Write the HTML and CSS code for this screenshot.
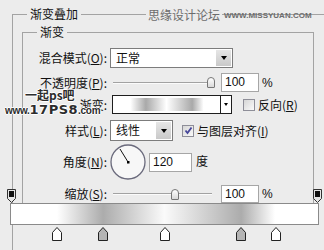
FILE: index.html
```html
<!DOCTYPE html>
<html lang="zh-CN">
<head>
  <meta charset="UTF-8">
  <meta name="viewport" content="width=device-width, initial-scale=1.0">
  <title>渐变叠加</title>
  <link rel="stylesheet" href="styles.css">
</head>
<body>
  <section class="group outer">
    <div class="group-title">渐变叠加</div>

    <section class="group inner">
      <div class="group-title">渐变</div>

      <div class="row row-blend">
        <span class="lbl">混合模式(<u>O</u>):</span>
        <div class="select blend-select">
          <span class="select-text">正常</span>
          <span class="select-btn"><i class="tri"></i></span>
        </div>
      </div>

      <div class="row row-opacity">
        <span class="lbl">不透明度(<u>P</u>):</span>
        <div class="slider opacity-slider">
          <span class="track" style="width: 94px"></span>
          <span class="thumb"></span>
        </div>
        <span class="field">100</span>
        <span class="unit">%</span>
      </div>

      <div class="row row-gradient">
        <span class="lbl">渐变:</span>
        <div class="grad-field">
          <span class="grad-preview"></span>
          <span class="grad-btn"><i class="tri tri-sm"></i></span>
        </div>
        <span class="check"></span>
        <span class="check-text">反向(<u>R</u>)</span>
      </div>

      <div class="row row-style">
        <span class="lbl">样式(<u>L</u>):</span>
        <div class="select style-select">
          <span class="select-text">线性</span>
          <span class="select-btn"><i class="tri"></i></span>
        </div>
        <span class="check is-checked">
          <svg width="9" height="9" viewBox="0 0 9 9"><path d="M1.5 4.5 L3.5 7 L7.5 1.5" fill="none" stroke="#46469a" stroke-width="1.8"/></svg>
        </span>
        <span class="check-text">与图层对齐(<u>I</u>)</span>
      </div>

      <div class="row row-angle">
        <span class="lbl">角度(<u>N</u>):</span>
        <svg class="dial" width="36" height="36" viewBox="0 0 36 36">
          <circle cx="18" cy="18" r="17" fill="#f7f7f7" stroke="#6a6a7c" stroke-width="1.3"/>
          <line x1="18" y1="18" x2="10" y2="5" stroke="#111" stroke-width="1"/>
          <rect x="17" y="17" width="2.5" height="2.5" fill="#000"/>
        </svg>
        <span class="field angle-field">120</span>
        <span class="unit deg">度</span>
      </div>

      <div class="row row-scale">
        <span class="lbl">缩放(<u>S</u>):</span>
        <div class="slider scale-slider">
          <span class="track" style="width: 58px"></span>
          <span class="thumb"></span>
          <span class="track rest"></span>
        </div>
        <span class="field scale-field">100</span>
        <span class="unit">%</span>
      </div>
    </section>
  </section>

  <!-- watermarks stamped over the dialog -->
  <div class="wm-site">
    <span class="wm-cn">思缘设计论坛</span>
    <span class="wm-url">WWW.MISSYUAN.COM</span>
  </div>

  <div class="wm-ps">
    <div class="wm-ps-cn">一起ps吧</div>
    <div class="wm-ps-url"><span class="sm">www.</span><span class="big">17PS8</span><span class="sm">.com</span></div>
  </div>

  <!-- gradient editor strip pasted over the bottom -->
  <div class="editor">
    <div class="opacity-stops">
      <svg class="ostop" width="9" height="14" viewBox="0 0 9 14">
        <path d="M0.5 0.5 H8.5 V9.5 L4.5 13.5 L0.5 9.5 Z" fill="#e6e6e6" stroke="#333"/>
        <rect x="2" y="2" width="5" height="6" fill="#111"/>
      </svg>
      <svg class="ostop" width="9" height="14" viewBox="0 0 9 14">
        <path d="M0.5 0.5 H8.5 V9.5 L4.5 13.5 L0.5 9.5 Z" fill="#e6e6e6" stroke="#333"/>
        <rect x="2" y="2" width="5" height="6" fill="#111"/>
      </svg>
    </div>

    <div class="bar"></div>

    <div class="color-stops">
      <svg class="cstop" style="left: 15.3%" width="10" height="14" viewBox="0 0 10 14">
        <path d="M0.5 13.5 V5.5 L5 0.5 L9.5 5.5 V13.5 Z" fill="#fff" stroke="#222"/>
      </svg>
      <svg class="cstop" style="left: 30.2%" width="10" height="14" viewBox="0 0 10 14">
        <path d="M0.5 13.5 V5.5 L5 0.5 L9.5 5.5 V13.5 Z" fill="#b4b4b4" stroke="#222"/>
      </svg>
      <svg class="cstop" style="left: 50.3%" width="10" height="14" viewBox="0 0 10 14">
        <path d="M0.5 13.5 V5.5 L5 0.5 L9.5 5.5 V13.5 Z" fill="#fff" stroke="#222"/>
      </svg>
      <svg class="cstop" style="left: 75%" width="10" height="14" viewBox="0 0 10 14">
        <path d="M0.5 13.5 V5.5 L5 0.5 L9.5 5.5 V13.5 Z" fill="#b4b4b4" stroke="#222"/>
      </svg>
      <svg class="cstop" style="left: 86.4%" width="10" height="14" viewBox="0 0 10 14">
        <path d="M0.5 13.5 V5.5 L5 0.5 L9.5 5.5 V13.5 Z" fill="#fff" stroke="#222"/>
      </svg>
    </div>
  </div>
</body>
</html>
```

FILE: styles.css
```css
/* Layer style: gradient overlay panel */

body {
  margin: 0;
  width: 324px;
  height: 250px;
  overflow: hidden;
  position: relative;
  background: #ececec;
  font-family: "Noto Sans CJK SC", "Liberation Sans", sans-serif;
  font-size: 12px;
  line-height: 16px;
  color: #111;
}

/* ***** group boxes ***** */

.group {
  box-sizing: border-box;
  border: 1px solid #a3a3a3;
}

/* title sits on the top border and hides the line behind it */
.group-title {
  display: table;
  margin-top: -9px;
  padding: 0 3px;
  line-height: 16px;
  background: #ececec;
}

/* the outer box runs off the right and bottom edges */
.outer {
  margin: 14px 0 0 12px;
  padding: 0 0 0 9px;
  width: 312px;
  height: 236px;
  border-right: none;
  border-bottom: none;
}

.outer > .group-title {
  margin-left: 5px;
}

.inner {
  width: 292px;
  margin-top: 10px;
  padding-bottom: 10px;
}

.inner > .group-title {
  margin-left: 14px;
}

/* ***** rows ***** */

.row {
  display: flex;
  align-items: center;
  margin-top: 5px;
}

.lbl {
  flex: none;
  width: 84px;
  margin-right: 3px;
  text-align: right;
  white-space: nowrap;
}

.row-blend { margin-top: 8px; height: 20px; }
.row-opacity { height: 19px; }
.row-gradient { margin-top: 3px; height: 19px; }
.row-style { margin-top: 6px; height: 21px; }
.row-angle { margin-top: 3px; height: 36px; }
.row-scale { margin-top: 5px; height: 18px; }

/* ***** dropdowns ***** */

.select {
  box-sizing: border-box;
  display: flex;
  height: 100%;
  border: 1px solid #7c7c7c;
  background: #fff;
}

.blend-select { width: 123px; }
.style-select { width: 63px; }

.select-text {
  padding-left: 5px;
  line-height: 18px;
}

.select-btn {
  display: flex;
  justify-content: center;
  align-items: center;
  width: 15px;
  margin: 1px 1px 1px auto;
  background: linear-gradient(#e6e6e6, #c9c9c9);
}

.tri {
  width: 0;
  height: 0;
  border-left: 3px solid transparent;
  border-right: 3px solid transparent;
  border-top: 4px solid #000;
}

.tri-sm {
  border-left-width: 2px;
  border-right-width: 2px;
  border-top-width: 3px;
}

/* ***** gradient picker ***** */

.grad-field {
  box-sizing: border-box;
  display: flex;
  width: 120px;
  height: 100%;
  margin-left: 2px;
  border: 1px solid #1e1e1e;
  background: #fff;
}

.grad-preview {
  flex: 1;
  margin: 2px;
  background: linear-gradient(to right, #fff 0%, #fff 15%, #a9a9a9 30%, #fff 50%, #a9a9a9 75%, #fff 86%, #fff 100%);
}

.grad-btn {
  display: flex;
  justify-content: center;
  align-items: center;
  width: 10px;
  border-left: 1px solid #1e1e1e;
}

/* ***** checkboxes ***** */

.check {
  box-sizing: border-box;
  display: flex;
  justify-content: center;
  align-items: center;
  width: 12px;
  height: 12px;
  margin-left: 11px;
  border: 1px solid #8e8e98;
  background: linear-gradient(135deg, #d6d6d6, #fafafa);
}

.row-style .check { margin-left: 9px; }

.check-text {
  margin-left: 3px;
  white-space: nowrap;
}

/* ***** sliders and number fields ***** */

.slider {
  display: flex;
  align-items: center;
  margin-left: 3px;
}

.opacity-slider { width: 102px; }
.scale-slider { width: 99px; }

.track {
  height: 0;
  border-top: 1px solid #a2a2a2;
  border-bottom: 1px solid #fbfbfb;
}

.track.rest { flex: 1; }

.thumb {
  box-sizing: border-box;
  flex: none;
  width: 8px;
  height: 11px;
  border: 1px solid #777;
  border-radius: 4px 4px 1px 1px;
  background: linear-gradient(#fff, #d9d9d9);
}

.field {
  box-sizing: border-box;
  width: 38px;
  height: 100%;
  margin-left: 6px;
  padding-left: 3px;
  border: 1px solid #a6a6a6;
  background: #fff;
  font-family: "Liberation Sans", sans-serif;
  font-size: 12px;
  line-height: 17px;
}

.scale-field { margin-left: 9px; }

.angle-field {
  width: 43px;
  height: 19px;
  margin-left: 3px;
}

.unit {
  margin-left: 3px;
  font-family: "Liberation Sans", "Noto Sans CJK SC", sans-serif;
}

.unit.deg { margin-left: 4px; }

.dial { flex: none; }

/* ***** watermarks ***** */

.wm-site {
  position: absolute;
  left: 146px;
  top: 7px;
  display: flex;
  align-items: flex-start;
  color: #6c6c6c;
}

.wm-cn {
  padding: 0 2px;
  background: #ececec;
}

.wm-url {
  margin: 4px 0 0 2px;
  font-family: "Liberation Sans", sans-serif;
  font-size: 8px;
  font-weight: bold;
  line-height: 10px;
}

.wm-ps {
  position: absolute;
  left: 5px;
  top: 87px;
  color: #2c2c2c;
  font-weight: bold;
  text-shadow: 1px 0 0 #fff, -1px 0 0 #fff, 0 1px 0 #fff, 0 -1px 0 #fff;
}

.wm-ps-cn {
  margin-left: 20px;
  line-height: 16px;
}

.wm-ps-url {
  display: flex;
  align-items: baseline;
  font-family: "Liberation Sans", sans-serif;
  line-height: 14px;
}

.wm-ps-url .sm {
  font-size: 10px;
  letter-spacing: -0.3px;
}

.wm-ps-url .big {
  font-family: "DejaVu Sans", sans-serif;
  font-size: 13px;
  letter-spacing: 0.5px;
}

/* ***** gradient editor strip ***** */

.editor {
  position: absolute;
  left: 7px;
  top: 189px;
  width: 315px;
}

.opacity-stops {
  display: flex;
  justify-content: space-between;
  height: 14px;
}

.ostop { display: block; }

.bar {
  box-sizing: border-box;
  height: 22px;
  margin: 0 3px;
  border: 1px solid #8a8a8a;
  background: linear-gradient(to right, #fff 0%, #fff 15%, #acacac 30%, #fafafa 50%, #acacac 75%, #fff 86%, #fff 100%);
}

.color-stops {
  position: relative;
  height: 14px;
  margin: 2px 4px 0 3px;
}

.cstop {
  position: absolute;
  top: 0;
  display: block;
  transform: translateX(-50%);
}
```
